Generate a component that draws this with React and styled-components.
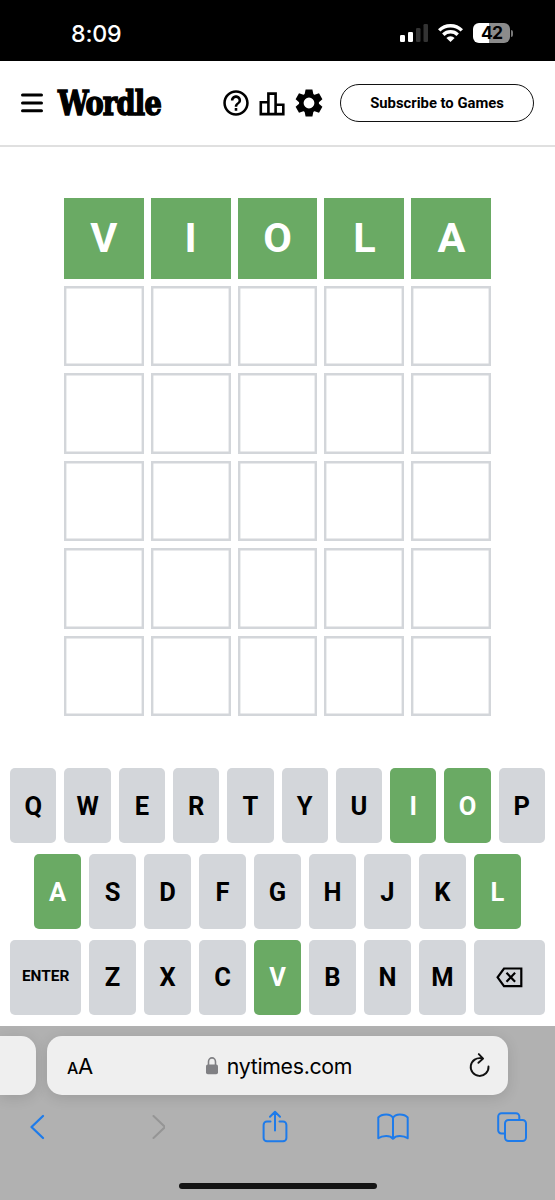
import React from "react";
import styled, { createGlobalStyle } from "styled-components";

const Global = createGlobalStyle`
  * { box-sizing: border-box; }
  html, body { margin: 0; padding: 0; background: #fff; }
  svg { display: block; flex: none; }
  button { font: inherit; color: inherit; border: 0; padding: 0; background: none; }
`;

const franklin = `Roboto, "Liberation Sans", sans-serif`;
const system = `Inter, "Liberation Sans", sans-serif`;

const Phone = styled.div`
  width: 555px;
  height: 1200px;
  display: flex;
  flex-direction: column;
  overflow: hidden;
  background: #fff;
  color: #000;
  font-family: ${franklin};
`;

const StatusBar = styled.div`
  height: 61px;
  flex: none;
  background: #000;
  color: #fff;
  display: flex;
  justify-content: space-between;
  align-items: flex-start;
  padding: 22px 42px 0 71px;
  font-family: ${system};
`;

const Clock = styled.span`
  font-size: 23.2px;
  line-height: 24px;
  font-weight: 500;
  letter-spacing: -0.2px;
`;

const StatusIcons = styled.div`
  display: flex;
  align-items: center;
  gap: 10px;
  height: 22px;
`;

const Battery = styled.div`
  display: flex;
  align-items: center;
  gap: 1px;
`;

const BatteryLevel = styled.span`
  width: 37px;
  height: 20px;
  border-radius: 6px;
  background: linear-gradient(to right, #fff 0 42%, #8b8b8b 42%);
  color: #000;
  font-size: 17.5px;
  font-weight: 700;
  line-height: 20px;
  text-align: center;
  letter-spacing: -0.9px;
`;

const BatteryTip = styled.span`
  width: 2px;
  height: 7px;
  border-radius: 0 2px 2px 0;
  background: #777;
`;

const Header = styled.header`
  height: 86px;
  flex: none;
  display: flex;
  align-items: center;
  padding: 0 21px;
  border-bottom: 2px solid #e0e0e0;
`;

const Logo = styled.h1`
  margin: 0 0 0 15px;
  width: 165px;
  font-family: "DejaVu Serif Condensed", "DejaVu Serif", serif;
  font-size: 34px;
  line-height: 40px;
  font-weight: 700;
  letter-spacing: -0.8px;
  -webkit-text-stroke: 1.5px #000;
  transform: scaleX(0.89);
  transform-origin: left;
`;

const HeaderIcons = styled.div`
  display: flex;
  align-items: center;
  gap: 10px;
`;

const Subscribe = styled.button`
  margin-left: auto;
  width: 194px;
  height: 38px;
  border: 1px solid #121212;
  border-radius: 19px;
  font-size: 14.8px;
  font-weight: 700;
  line-height: 37px;
  white-space: nowrap;
`;

const Board = styled.main`
  display: grid;
  grid-template-columns: repeat(5, 1fr);
  grid-template-rows: repeat(6, 1fr);
  gap: 7px;
  width: 427.5px;
  height: 518px;
  flex: none;
  margin: 51px 0 0 63.8px;
`;

const Tile = styled.div`
  display: flex;
  align-items: center;
  justify-content: center;
  background: ${(p) => (p.$correct ? "#6aaa64" : "#fff")};
  box-shadow: ${(p) => (p.$correct ? "none" : "inset 0 0 0 2.4px #d3d6da")};
  color: #fff;
  font-size: 41.5px;
  font-weight: 700;
  line-height: 1;
  padding-bottom: 2px;
`;

const Keyboard = styled.div`
  display: flex;
  flex-direction: column;
  gap: 10.6px;
  margin-top: 52.4px;
  padding: 0 10.2px;
  flex: none;
`;

const KeyRow = styled.div`
  display: flex;
  gap: 8px;
  height: 75px;
  padding: 0 ${(p) => (p.$inset ? "24px" : "0")};
`;

const Key = styled.button`
  flex: ${(p) => (p.$wide ? "0 0 70.8px" : "1 1 0")};
  display: flex;
  align-items: center;
  justify-content: center;
  padding-top: ${(p) => (p.$wide ? "0" : "2px")};
  border-radius: 5px;
  background: ${(p) => (p.$correct ? "#6aaa64" : "#d3d6da")};
  color: ${(p) => (p.$correct ? "#fff" : "#000")};
  font-size: ${(p) => (p.$wide ? "15.4px" : "25.5px")};
  font-weight: 700;
  line-height: 1;
`;

const Browser = styled.footer`
  flex: 1;
  margin-top: 11.4px;
  background: #b1b1b1;
  display: flex;
  flex-direction: column;
  align-items: center;
  padding-top: 10px;
  font-family: ${system};
`;

const AddressRow = styled.div`
  width: 555px;
  display: flex;
  gap: 11px;
`;

const PreviousTab = styled.div`
  width: 36px;
  height: 59px;
  border-radius: 0 15px 15px 0;
  background: #efefef;
  box-shadow: 0 3px 14px rgba(0, 0, 0, 0.12);
`;

const AddressBar = styled.div`
  width: 461px;
  height: 59px;
  border-radius: 15px;
  background: #efefef;
  box-shadow: 0 3px 14px rgba(0, 0, 0, 0.12);
  display: flex;
  align-items: center;
  justify-content: space-between;
  padding: 0 17px 0 20px;
`;

const TextSize = styled.span`
  font-size: 22px;
  line-height: 26px;
  padding-top: 3px;
  width: 30px;
  white-space: nowrap;
  letter-spacing: -0.3px;
  small { font-size: 16px; font-weight: 500; }
`;

const Site = styled.div`
  display: flex;
  align-items: center;
  gap: 9px;
  margin-right: 6px;
  padding-top: 1px;
  font-size: 21.3px;
  line-height: 28px;
  letter-spacing: -0.3px;
`;

const Toolbar = styled.nav`
  width: 555px;
  display: flex;
  justify-content: space-between;
  align-items: center;
  padding: 0 27px 0 21.5px;
  margin-top: 14px;
  height: 36px;
`;

const ToolButton = styled.button`
  width: 32px;
  display: flex;
  justify-content: center;
`;

const HomeIndicator = styled.div`
  width: 198px;
  height: 6px;
  border-radius: 3px;
  background: #141414;
  margin-top: 38px;
`;

const Signal = () => (
  <svg width="28" height="18" viewBox="0 0 28 18">
    <rect x="0" y="11" width="5" height="7" rx="1.3" fill="#fff" />
    <rect x="8" y="8" width="5" height="10" rx="1.3" fill="#fff" />
    <rect x="16" y="4" width="4.5" height="14" rx="1.3" fill="#333" />
    <rect x="23.5" y="0" width="4.5" height="18" rx="1.3" fill="#333" />
  </svg>
);

const Wifi = () => (
  <svg width="25" height="18" viewBox="0 0 25 18" fill="none" stroke="#fff" strokeWidth="3.4">
    <path d="M1.2 6.400a16 16 0 0 1 22.600 0M5.300 10.800a10.200 10.200 0 0 1 14.400 0" />
    <path d="M12.500 18 8.400 14a5.800 5.800 0 0 1 8.200 0Z" fill="#fff" stroke="none" />
  </svg>
);

const Menu = () => (
  <svg width="22" height="20" viewBox="0 0 22 20" stroke="#000" strokeWidth="3" strokeLinecap="round">
    <path d="M1.5 2h19M1.5 10h19M1.5 17.8h19" />
  </svg>
);

const Help = () => (
  <svg width="26" height="28" viewBox="2 1 20 22">
    <path d="M11 18h2v-2h-2v2zm1-16C6.480 2 2 6.480 2 12s4.480 10 10 10 10-4.480 10-10S17.520 2 12 2zm0 18c-4.410 0-8-3.590-8-8s3.590-8 8-8 8 3.590 8 8-3.590 8-8 8zm0-14c-2.210 0-4 1.790-4 4h2c0-1.100.9-2 2-2s2 .9 2 2c0 2-3 1.750-3 5h2c0-2.250 3-2.500 3-5 0-2.210-1.790-4-4-4z" />
  </svg>
);

const Stats = () => (
  <svg width="26" height="28" viewBox="0 0 26 28" fill="none" stroke="#000" strokeWidth="2.6">
    <path d="M9.400 25.100V4.600h7.200v20.500M9.400 13.200H1.800v11.900h22.500v-9.300h-7.700" />
  </svg>
);

const Gear = () => (
  <svg width="28" height="28" viewBox="-14 -14 28 28">
    <circle r="7.7" fill="none" stroke="#000" strokeWidth="4.600" />
    {[0, 60, 120, 180, 240, 300].map((a) => (
      <path key={a} transform={`rotate(${a})`} d="M-3.400-13.500h6.800l1.100 5.300h-9z" />
    ))}
  </svg>
);

const Backspace = () => (
  <svg width="27" height="21" viewBox="0 0 27 21" fill="none" stroke="#000" strokeWidth="2.200">
    <path d="M8 1.500h17.300v17.700H8L1.600 10.300ZM10.500 5.800l8.600 9M19.100 5.800l-8.600 9" />
  </svg>
);

const Lock = () => (
  <svg width="12" height="18" viewBox="0 0 12 18">
    <rect y="7.500" width="12" height="9.800" rx="1.800" fill="#808084" />
    <path d="M2.500 9V4.800a3.500 3.900 0 0 1 7 0V9" fill="none" stroke="#808084" strokeWidth="1.600" />
  </svg>
);

const Reload = () => (
  <svg width="24" height="26" viewBox="0 0 24 26" fill="none" stroke="#111" strokeWidth="1.900" strokeLinecap="round" strokeLinejoin="round">
    <path d="M14.800 6.400A8.900 8.900 0 1 0 21.500 14.500M11.800 2.100l4.300 4.500-4.700 4.200" />
  </svg>
);

const blue = { fill: "none", stroke: "#1e7bea", strokeWidth: 2, strokeLinecap: "round", strokeLinejoin: "round" };

const Back = () => (
  <svg width="17" height="26" viewBox="0 0 17 26" {...blue}><path d="M14 2 2.500 13 14 24" strokeWidth="2.300" /></svg>
);
const Forward = () => (
  <svg width="17" height="26" viewBox="-2.500 0 17 26" {...blue} stroke="#959595"><path d="m3 2 11.500 11L3 24" /></svg>
);
const ForwardIcon = styled(Forward)``;
const Share = () => (
  <svg width="26" height="34" viewBox="0 0 26 34" {...blue}>
    <path d="M8.500 11.500H5a3.400 3.400 0 0 0-3.400 3.400v13A3.400 3.400 0 0 0 5 31.300h16a3.400 3.400 0 0 0 3.400-3.400v-13A3.400 3.400 0 0 0 21 11.500h-3.500M13 20.500V2M8 6.800 13 1.800l5 5" />
  </svg>
);
const Book = () => (
  <svg width="32" height="28" viewBox="0 0 32 28" {...blue}>
    <path d="M16 4.900C14.500 2.200 12 1.500 9.200 1.500 6 1.500 3 2.500 1.300 4.500v20.800C3.500 23.600 6.300 23 9.200 23c2.900 0 5.300.9 6.800 2.800 1.500-1.900 3.900-2.800 6.800-2.800 2.900 0 5.700.6 7.900 2.300V4.500C29 2.500 26 1.500 22.800 1.500 20 1.500 17.500 2.200 16 4.900Zm0 0v20.900" />
  </svg>
);
const Tabs = () => (
  <svg width="30" height="30" viewBox="0 0 30 30" {...blue}>
    <rect x="8" y="8" width="21" height="21" rx="3.500" />
    <path d="M8 21.500H4.500A3.200 3.200 0 0 1 1.200 18V4.500a3.300 3.300 0 0 1 3.300-3.300H19a3.300 3.300 0 0 1 3.300 3.300V8" />
  </svg>
);

const word = "VIOLA";
const rows = ["QWERTYUIOP", "ASDFGHJKL", "ZXCVBNM"];
const tools = [Back, ForwardIcon, Share, Book, Tabs];

export default function App() {
  return (
    <Phone>
      <Global />
      <StatusBar>
        <Clock>8:09</Clock>
        <StatusIcons>
          <Signal />
          <Wifi />
          <Battery>
            <BatteryLevel>42</BatteryLevel>
            <BatteryTip />
          </Battery>
        </StatusIcons>
      </StatusBar>
      <Header>
        <Menu />
        <Logo>Wordle</Logo>
        <HeaderIcons>
          <Help />
          <Stats />
          <Gear />
        </HeaderIcons>
        <Subscribe>Subscribe to Games</Subscribe>
      </Header>
      <Board>
        {Array.from({ length: 30 }, (_, i) => (
          <Tile key={i} $correct={i < word.length}>{word[i]}</Tile>
        ))}
      </Board>
      <Keyboard>
        {rows.map((letters, i) => (
          <KeyRow key={letters} $inset={i === 1}>
            {i === 2 && <Key $wide>ENTER</Key>}
            {[...letters].map((l) => (
              <Key key={l} $correct={word.includes(l)}>{l}</Key>
            ))}
            {i === 2 && <Key $wide aria-label="Backspace"><Backspace /></Key>}
          </KeyRow>
        ))}
      </Keyboard>
      <Browser>
        <AddressRow>
          <PreviousTab />
          <AddressBar>
            <TextSize><small>A</small>A</TextSize>
            <Site><Lock />nytimes.com</Site>
            <Reload />
          </AddressBar>
        </AddressRow>
        <Toolbar>
          {tools.map((Icon, i) => (
            <ToolButton key={i}><Icon /></ToolButton>
          ))}
        </Toolbar>
        <HomeIndicator />
      </Browser>
    </Phone>
  );
}
